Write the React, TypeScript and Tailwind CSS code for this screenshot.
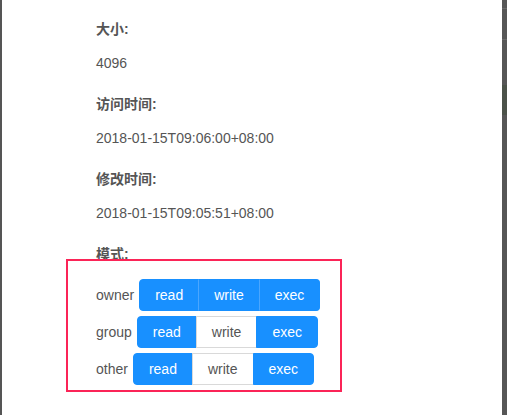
import React from 'react';

type Perm = { who: string; read: boolean; write: boolean; exec: boolean };

const perms: Perm[] = [
  { who: 'owner', read: true, write: true, exec: true },
  { who: 'group', read: true, write: false, exec: true },
  { who: 'other', read: true, write: false, exec: true },
];

const info = [
  { label: '大小:', value: '4096' },
  { label: '访问时间:', value: '2018-01-15T09:06:00+08:00' },
  { label: '修改时间:', value: '2018-01-15T09:05:51+08:00' },
];

function PermGroup({ p }: { p: Perm }) {
  const items = [
    { name: 'read', on: p.read },
    { name: 'write', on: p.write },
    { name: 'exec', on: p.exec },
  ];
  return (
    <div className="flex">
      {items.map((it, i) => {
        const prevOn = i > 0 && items[i - 1].on;
        const first = i === 0;
        const last = i === items.length - 1;
        let cls = 'h-8 px-[15px] flex items-center text-[14px] border ';
        if (it.on) {
          cls += 'bg-[#1890ff] text-white border-[#1890ff] ';
          if (prevOn) cls += 'border-l-[#4aa6ff] ';
        } else {
          cls += 'bg-white text-[#555] border-[#d9d9d9] ';
        }
        if (!first) cls += '-ml-px ';
        if (first) cls += 'rounded-l ';
        if (last) cls += 'rounded-r ';
        return (
          <div key={it.name} className={cls}>
            {it.name}
          </div>
        );
      })}
    </div>
  );
}

export default function App() {
  return (
    <div
      className="w-[507px] h-[415px] flex overflow-hidden"
      style={{ fontFamily: '"Liberation Sans", "Noto Sans CJK SC", sans-serif' }}
    >
      <div className="w-[2px] bg-[#555]" />
      <div className="flex-1 bg-white relative pl-[94px] pt-[19px] text-[14px] leading-[21px] text-[#555]">
        {info.map((row) => (
          <div key={row.label}>
            <div className="font-bold mb-[13px]">{row.label}</div>
            <div className="mb-5">{row.value}</div>
          </div>
        ))}
        <div className="font-bold">模式:</div>
        <div className="flex flex-col gap-[5px] mt-[14px]">
          {perms.map((p) => (
            <div key={p.who} className="flex items-center gap-[5px]">
              <span>{p.who}</span>
              <PermGroup p={p} />
            </div>
          ))}
        </div>

        {/* highlight box */}
        <div className="absolute left-[64px] top-[259px] w-[276px] h-[133px] border-2 border-[#fb2457]" />
      </div>
      <div className="w-[5px] bg-[#565656] flex flex-col">
        <div className="h-[8px]" />
        <div className="h-px bg-[#6a6a6a]" />
        <div className="h-[30px]" />
        <div className="h-px bg-[#6a6a6a]" />
        <div className="h-[45px]" />
        <div className="h-[30px] bg-[#4b5249]" />
      </div>
    </div>
  );
}
